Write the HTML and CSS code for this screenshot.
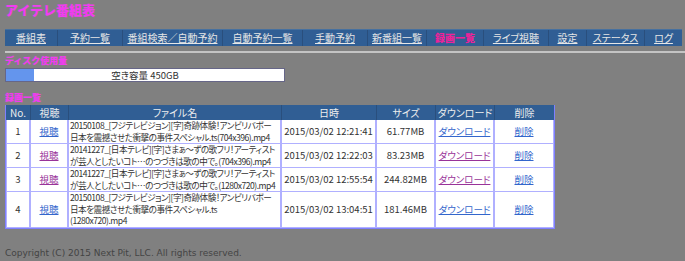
FILE: index.html
```html
<!DOCTYPE html>
<html lang="ja">
<head>
    <meta charset="UTF-8">
    <title>アイテレ番組表</title>
    <link rel="stylesheet" href="styles.css">
</head>
<body>
    <h1 class="title">アイテレ番組表</h1>
    <ul class="menu">
        <li><a href="#">番組表</a></li>
        <li><a href="#">予約一覧</a></li>
        <li><a href="#">番組検索／自動予約</a></li>
        <li><a href="#">自動予約一覧</a></li>
        <li><a href="#">手動予約</a></li>
        <li><a href="#">新番組一覧</a></li>
        <li class="current">録画一覧</li>
        <li><a href="#">ライブ視聴</a></li>
        <li><a href="#">設定</a></li>
        <li><a href="#">ステータス</a></li>
        <li><a href="#">ログ</a></li>
    </ul>
    <hr class="line">

    <h2 class="caption">ディスク使用量</h2>
    <div class="disk">
        <div class="disk-used" style="width: 10%;"></div>
        <div class="disk-text">空き容量 450GB</div>
    </div>

    <h2 class="caption">録画一覧</h2>
    <table class="list">
        <thead>
            <tr>
                <th class="c-no">No.</th>
                <th class="c-view">視聴</th>
                <th class="c-file">ファイル名</th>
                <th class="c-date">日時</th>
                <th class="c-size">サイズ</th>
                <th class="c-dl">ダウンロード</th>
                <th class="c-del">削除</th>
            </tr>
        </thead>
        <tbody>
            <tr>
                <td>1</td>
                <td><a href="#">視聴</a></td>
                <td class="file">20150108_[フジテレビジョン][字]奇跡体験！アンビリバボー<br>日本を震撼させた衝撃の事件スペシャル.ts(704x396).mp4</td>
                <td>2015/03/02 12:21:41</td>
                <td>61.77MB</td>
                <td><a href="#">ダウンロード</a></td>
                <td><a href="#">削除</a></td>
            </tr>
            <tr>
                <td>2</td>
                <td><a href="#" class="visited">視聴</a></td>
                <td class="file">20141227_[日本テレビ][字]さまぁ～ずの歌フリ！アーティスト<br>が芸人としたいコト…のつづきは歌の中で。(704x396).mp4</td>
                <td>2015/03/02 12:22:03</td>
                <td>83.23MB</td>
                <td><a href="#" class="visited">ダウンロード</a></td>
                <td><a href="#">削除</a></td>
            </tr>
            <tr>
                <td>3</td>
                <td><a href="#" class="visited">視聴</a></td>
                <td class="file">20141227_[日本テレビ][字]さまぁ～ずの歌フリ！アーティスト<br>が芸人としたいコト…のつづきは歌の中で。(1280x720).mp4</td>
                <td>2015/03/02 12:55:54</td>
                <td>244.82MB</td>
                <td><a href="#" class="visited">ダウンロード</a></td>
                <td><a href="#">削除</a></td>
            </tr>
            <tr>
                <td>4</td>
                <td><a href="#">視聴</a></td>
                <td class="file">20150108_[フジテレビジョン][字]奇跡体験！アンビリバボー<br>日本を震撼させた衝撃の事件スペシャル.ts<br>(1280x720).mp4</td>
                <td>2015/03/02 13:04:51</td>
                <td>181.46MB</td>
                <td><a href="#">ダウンロード</a></td>
                <td><a href="#">削除</a></td>
            </tr>
        </tbody>
    </table>

    <p class="copyright">Copyright (C) 2015 Next Pit, LLC. All rights reserved.</p>
</body>
</html>
```

FILE: styles.css
```css
body {
    margin: 0;
    padding: 0 5px;
    background-color: #808080;
    color: #333;
    font-family: "Noto Sans CJK JP", "Noto Sans", sans-serif;
    font-feature-settings: "palt";
    font-size: 9.5px;
}

a {
    color: #3366cc;
}

a.visited {
    color: #993399;
}

.title {
    margin: 0;
    padding-top: 1px;
    height: 28px;
    color: #f03cf0;
    font-size: 13px;
    font-weight: 900;
    font-feature-settings: normal;
    line-height: 18px;
}

.menu {
    display: grid;
    grid-template-columns: 52px 65px 100px 80px 65px 59px 57px 65px 38px 58px 38px;
    margin: 0;
    padding: 0;
    list-style: none;
    width: 677px;
    background-color: #305e94;
    border-top: 1px solid #46709f;
}

.menu li {
    height: 16px;
    line-height: 16px;
    text-align: center;
    font-size: 10px;
    border-left: 1px solid #2a4f7d;
}

.menu li:first-child {
    border-left: 0;
}

.menu a {
    color: #e6e6e6;
}

.menu .current {
    color: #ee2299;
    font-weight: 900;
}

.line {
    margin: 5px -5px 0 0;
    border: 0;
    border-top: 2px solid #c4c4c4;
}

.caption {
    margin: 1px 0 0;
    color: #f03cf0;
    font-size: 9px;
    font-weight: 900;
    font-feature-settings: normal;
    line-height: 14px;
}

.disk {
    display: flex;
    position: relative;
    width: 278px;
    height: 12px;
    margin-bottom: 9px;
    background-color: #fff;
    border: 1px solid #666688;
}

.disk-used {
    background-color: #6495ed;
}

.disk-text {
    position: absolute;
    left: 0;
    right: 0;
    top: 0;
    line-height: 12px;
    text-align: center;
    font-size: 9.5px;
}

.list {
    border-collapse: separate;
    border-spacing: 0;
    width: 542px;
    table-layout: fixed;
    border: 1px solid #8080ff;
    border-top: 0;
    background-color: #fff;
}

.list th {
    background-color: #305e94;
    color: #eee;
    font-weight: normal;
    font-size: 10px;
    height: 15px;
    padding: 0;
    border-left: 1px solid #2a4f7d;
}

.list th:first-child {
    border-left: 0;
}

.list td {
    text-align: center;
    padding: 0 1px;
    line-height: 11.5px;
    border: 1px solid #b0b0ff;
    border-top: 0;
    height: 23px;
}

.list td.file {
    text-align: left;
    white-space: nowrap;
    overflow: hidden;
    font-size: 8.6px;
    letter-spacing: -0.5px;
}

.c-no { width: 24px; }
.c-view { width: 37px; }
.c-file { width: 212px; }
.c-date { width: 94px; }
.c-size { width: 58px; }
.c-dl { width: 58px; }
.c-del { width: 59px; }

.copyright {
    margin: 19px 0 0;
    color: #444;
    font-family: "DejaVu Sans", sans-serif;
    font-size: 9px;
}
```
